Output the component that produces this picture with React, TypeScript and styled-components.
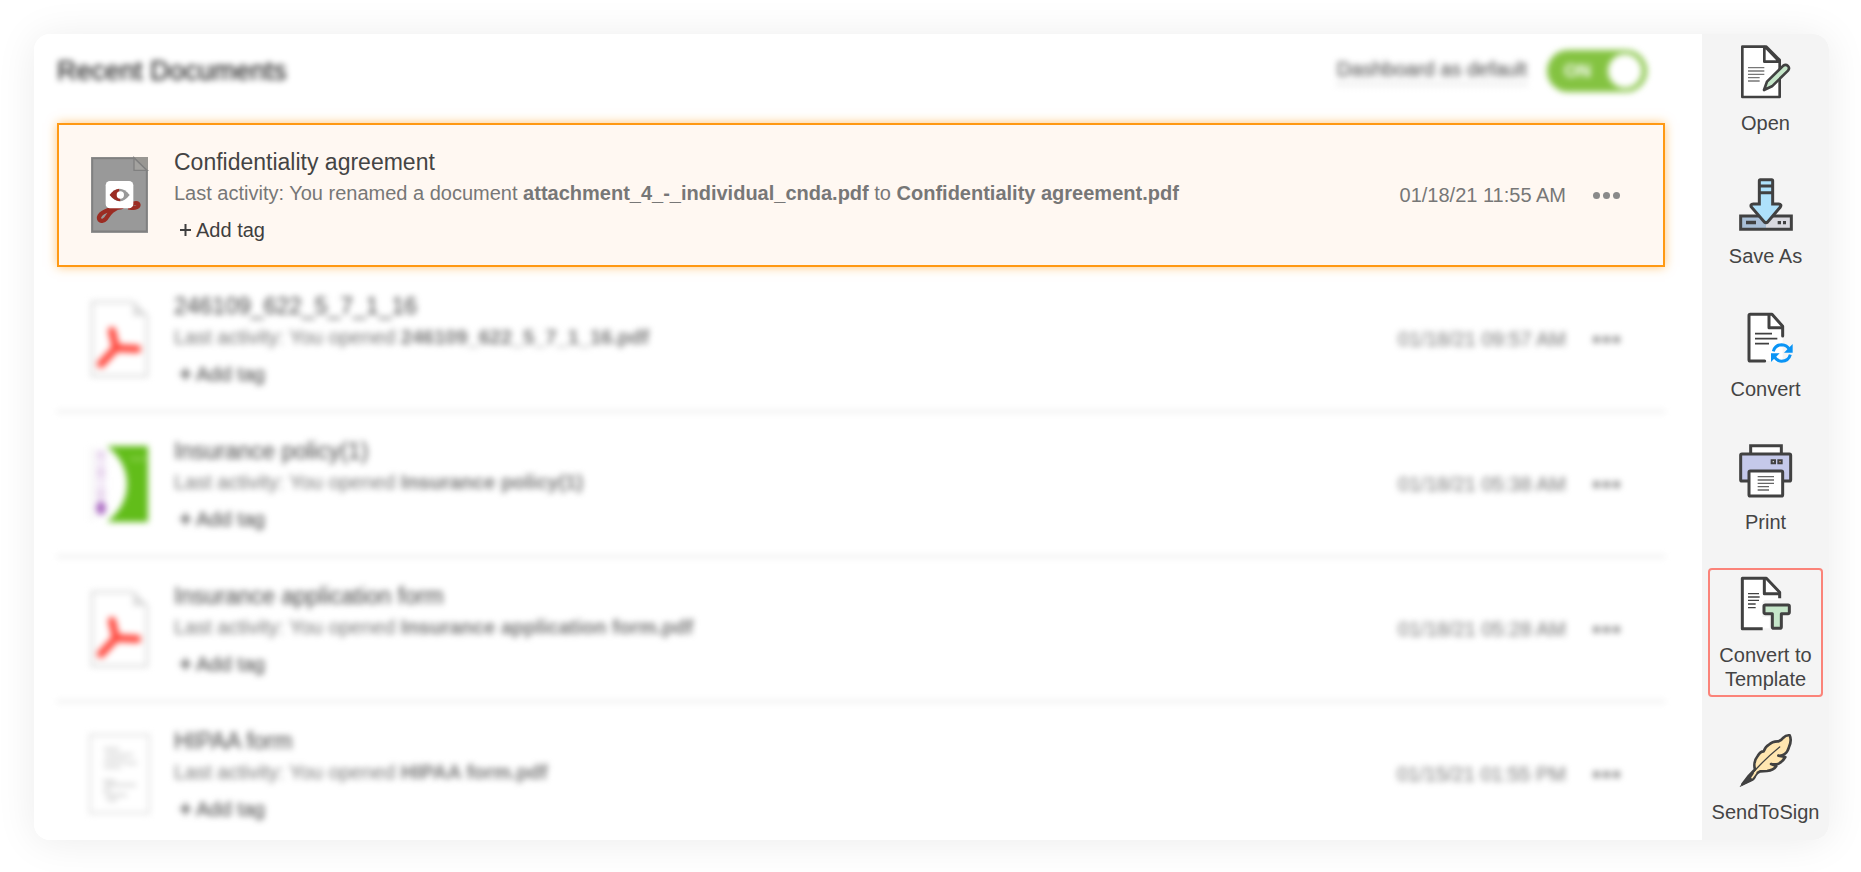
import React, { useState } from "react";
import styled, { createGlobalStyle, css } from "styled-components";

const GlobalStyle = createGlobalStyle`
  * { box-sizing: border-box; }
  body {
    margin: 0;
    background: #fff;
    color: #3f3f3f;
    font-family: "Liberation Sans", Arial, Helvetica, sans-serif;
    font-size: 20px;
    line-height: 24px;
  }
  button { font: inherit; color: inherit; background: none; border: 0; padding: 0; cursor: pointer; }
`;

const softFocus = css`
  filter: blur(3px);
`;

const Page = styled.div`
  min-height: 100vh;
  padding: 34px 32px 32px 34px;
`;

const Panel = styled.div`
  display: flex;
  overflow: hidden;
  background: #fff;
  border-radius: 16px;
`;

const PanelShadow = styled.div`
  border-radius: 16px;
  box-shadow: 0 2px 40px rgba(0, 0, 0, 0.08);
`;

const Documents = styled.main`
  flex: 1;
  min-width: 0;
  padding: 0 37px 0 23px;
`;

const Header = styled.header`
  display: flex;
  align-items: center;
  justify-content: space-between;
  height: 89px;
  padding: 0 18px 15px 0;
  ${softFocus}
`;

const Heading = styled.h1`
  margin: 0;
  font-size: 27px;
  line-height: 28px;
  font-weight: 400;
  color: #000;
`;

const SwitchField = styled.label`
  display: flex;
  align-items: center;
  gap: 20px;
  cursor: pointer;
`;

const SwitchText = styled.span`
  padding-bottom: 2px;
  border-bottom: 2px dotted #bbb;
`;

const Track = styled.span`
  display: flex;
  align-items: center;
  justify-content: space-between;
  width: 100px;
  height: 42px;
  padding: 0 5px 0 17px;
  border-radius: 21px;
  background: #84c341;
  color: #fff;
  font-size: 18px;
  font-weight: 700;
`;

const SwitchInput = styled.input`
  appearance: none;
  width: 34px;
  height: 34px;
  margin: 0;
  border-radius: 50%;
  background: #fff;
`;

const List = styled.ul`
  margin: 0;
  padding: 0;
  list-style: none;
`;

const Row = styled.li<{ $active?: boolean }>`
  display: flex;
  align-items: center;
  padding: 25px 45px 25px 34px;
  ${({ $active }) =>
    $active
      ? css`
          background: #fff8f2;
          box-shadow: inset 0 0 0 2px #ff9914, 0 0 10px rgba(255, 153, 20, 0.55);
        `
      : css`
          border-bottom: 1px solid #ccc;
          ${softFocus}
        `}
  &:last-child {
    padding-bottom: 19px;
    border-bottom: 0;
  }
`;

const Thumb = styled.svg`
  flex: none;
  width: 57px;
  height: 76px;
  margin-right: 26px;
  overflow: visible;
`;

const Info = styled.div`
  flex: 1;
  min-width: 0;
`;

const Title = styled.h2`
  margin: 0 0 5px;
  font-size: 23px;
  line-height: 28px;
  font-weight: 400;
  color: #444;
`;

const Activity = styled.p`
  margin: 0 0 13px;
  color: #777;
`;

const AddTag = styled.button`
  display: flex;
  align-items: center;
  gap: 5px;
  margin-left: 6px;
`;

const PlusIcon = styled.svg`
  width: 11px;
  height: 12px;
`;

const DateText = styled.time`
  margin-right: 27px;
  color: #777;
  white-space: nowrap;
`;

const MoreButton = styled.button`
  display: flex;
  gap: 3px;
`;

const Dot = styled.span`
  width: 7px;
  height: 7px;
  border-radius: 50%;
  background: #8a8a8a;
`;

const Sidebar = styled.nav`
  display: flex;
  flex: none;
  flex-direction: column;
  gap: 28px;
  width: 127px;
  padding: 2px 6px 10px;
  background: #f4f4f4;
`;

const Action = styled.button<{ $marked?: boolean }>`
  display: flex;
  flex-direction: column;
  align-items: center;
  gap: 13px;
  padding: 7px 0 4px;
  border: 2px solid ${({ $marked }) => ($marked ? "#fb8379" : "transparent")};
  border-radius: 4px;
  color: #444;
`;

const ActionIcon = styled.svg`
  width: 53px;
  height: 53px;
  overflow: visible;
`;

const INK = "#414141";

const PdfPage = () => (
  <>
    <path d="M1 1H42L56 15V75H1Z" fill="#fff" stroke="#d2d2d2" strokeWidth="2" />
    <path d="M42 1V15H56Z" fill="#ddd" />
    <path d="M21 30L25 47L46 48M25 47L10 63" fill="none" stroke="#ff4d43" strokeWidth="8" strokeLinecap="round" strokeLinejoin="round" />
  </>
);

const thumbs: Record<string, React.ReactNode> = {
  preview: (
    <g transform="scale(.3333)">
      <rect width="171" height="228" fill="#999" />
      <rect x="4" y="4" width="163" height="219" fill="none" stroke="#808080" strokeWidth="5" />
      <path d="M129 2V40H169Z" fill="#a3a29f" stroke="#808080" strokeWidth="4" />
      <path d="M129 0H171V40Z" fill="#999793" />
      <path d="M129 2L167 40" stroke="#808080" strokeWidth="4" />
      <path d="M92 150C64 153 35 163 26 176C18 190 35 197 44 186C53 173 61 155 92 148" fill="none" stroke="#9b2c23" strokeWidth="13" strokeLinecap="round" />
      <path d="M112 152C124 155 143 152 143 144C142 136 130 137 122 142" fill="none" stroke="#9b2c23" strokeWidth="12" />
      <rect x="44" y="72" width="83" height="82" rx="13" fill="#fff" />
      <path d="M56 114Q86 76 116 114Q86 152 56 114Z" fill="#999" />
      <path d="M56 114Q66 98 84 95L88 133Q70 131 56 114Z" fill="#9b2c23" />
      <circle cx="88" cy="114" r="11" fill="#fff" />
    </g>
  ),
  pdf: <PdfPage />,
  policy: (
    <>
      <path d="M16 0H57V76H16Q36 60 36 38Q36 16 16 0Z" fill="#62bd1a" />
      <path d="M39 13H55" stroke="#8bd04e" strokeWidth="3" />
      <path d="M1 1V75" stroke="#ddd" strokeWidth="1" />
      <path d="M10 4V54" stroke="#f3e9f7" strokeWidth="9" />
      <path d="M10 5V12M10 22V31M10 44V52" stroke="#e8d6ee" strokeWidth="9" />
      <ellipse cx="10" cy="62" rx="5" ry="7" fill="#ab6cc2" />
    </>
  ),
  form: (
    <>
      <rect x="-1" y="-1" width="59" height="78" fill="#fff" stroke="#ddd" strokeWidth="2" />
      <path d="M13 13H28M14 19H42M13 25H34M34 27H46M13 31H30M12 45H24M14 49H45M12 54H20M14 59H36M16 64H26" stroke="#c4c4c4" strokeWidth="2" />
    </>
  ),
};

const icons: Record<string, React.ReactNode> = {
  open: (
    <g strokeLinejoin="round" strokeLinecap="round" stroke={INK} strokeWidth="8">
      <path d="M10 5H82L122 45V156H10Z" fill="#fff" />
      <path d="M76 6V50H121L80 7" fill="#fff" />
      <path d="M27 68H76M27 78H76M27 88H76M27 98H62M27 108H62" stroke="#777" strokeWidth="4" strokeLinecap="butt" />
      <path d="M75 135L84 110L133 62Q140 57 147 63Q153 70 147 77L99 124Z" fill="#c5e6c9" />
    </g>
  ),
  save: (
    <g stroke={INK} strokeWidth="9">
      <path d="M5 114H81V154H5Z" fill="#a9bfd6" stroke="none" />
      <path d="M81 114H157V154H81Z" fill="#dadae0" stroke="none" />
      <path d="M5 114H157V154H5Z" fill="none" />
      <path d="M21 128H51V139H21ZM116 129H126V139H116ZM132 129H141V139H132Z" fill={INK} stroke="none" />
      <path d="M64 5H98Q101 5 101 8V78H119Q129 79 124 87L86 132Q81 136 76 132L37 87Q33 79 43 78H61V8Q61 5 64 5Z" fill="#aee1fb" />
      <path d="M61 24H101M61 44H101" />
    </g>
  ),
  convert: (
    <g fill="none" stroke={INK} strokeWidth="9" strokeLinecap="round" strokeLinejoin="round">
      <path d="M34 10H101L131 42V150H34Q30 150 30 146V14Q30 10 34 10Z" fill="#fff" stroke="none" />
      <path d="M131 75V46L99 10H34Q30 10 30 14V146Q30 150 34 150H77" />
      <path d="M90 12V50H130" />
      <path d="M48 68H99M48 83H115M48 98H90" strokeWidth="5" strokeLinecap="butt" />
      <circle cx="128" cy="126" r="34" fill="#f4f4f4" stroke="none" />
      <path d="M131 92A34 34 0 0 0 94 126Q94 144 108 154H131Z" fill="#fff" stroke="none" />
      <path d="M103 121Q108 102 128 101Q144 102 151 115M154 131Q149 150 128 151Q113 149 106 137" stroke="#0a94f5" strokeLinecap="butt" />
      <path d="M161 99V125H135ZM96 153V127H122Z" fill="#0a94f5" stroke="none" />
    </g>
  ),
  print: (
    <g stroke={INK} strokeWidth="9">
      <path d="M35 30V5H127V30" fill="#fff" />
      <rect x="5" y="30" width="150" height="81" rx="4" fill="#c5c9ea" />
      <path d="M98 49H108V58H98Z" fill="#fff" strokeWidth="6" />
      <path d="M118 49H128V58H118Z" fill="#ffc9a6" strokeWidth="6" />
      <rect x="30" y="81" width="101" height="75" rx="4" fill="#fff" />
      <path d="M56 98H105M56 108H105M56 118H105M56 128H90M56 138H90" strokeWidth="4" stroke="#666" />
    </g>
  ),
  template: (
    <g strokeLinejoin="round" stroke={INK} strokeWidth="9">
      <path d="M10 4H82L122 46V154H10Z" fill="#fff" stroke="none" />
      <path d="M122 64V46L82 4H10V155H71" fill="none" />
      <path d="M76 6V50H121" fill="none" />
      <path d="M27 50H60M27 60H62M27 70H60M27 81H50M27 92H50" fill="none" strokeWidth="4" />
      <path d="M77 69H124V77H157V120H126V158H92V120H70V77Z" fill="#f4f4f4" stroke="none" />
      <path d="M79 84H147Q151 84 151 88V106Q151 110 147 110H127V150Q127 154 123 154H104Q100 154 100 150V110H79Q75 110 75 106V88Q75 84 79 84Z" fill="#c5e6c9" />
    </g>
  ),
  sign: (
    <g stroke={INK} strokeWidth="8" strokeLinejoin="round" strokeLinecap="round">
      <path d="M48 106C44 94 47 77 56 66Q64 52 74 52Q79 38 90 32Q100 21 119 22Q128 18 132 12Q142 2 152 4Q159 19 150 39Q146 54 137 60Q130 66 118 65L139 69Q132 82 119 89Q108 92 96 90L112 96Q104 109 84 111L64 112Q53 116 49 124Q45 136 36 139L10 151L30 125Z" fill="#ffe6b0" />
      <path d="M4 157L30 124L44 118L41 134L32 141Z" fill={INK} strokeWidth="2" />
      <path d="M28 132Q66 85 122 39" fill="none" strokeWidth="4" />
      <path d="M39 131L50 116" stroke="#ffe6b0" strokeWidth="5" />
    </g>
  ),
};

type Doc = { title: string; thumb: string; date: string; activity: React.ReactNode; active?: boolean };

const docs: Doc[] = [
  {
    title: "Confidentiality agreement",
    thumb: "preview",
    date: "01/18/21 11:55 AM",
    active: true,
    activity: (
      <>
        You renamed a document <b>attachment_4_-_individual_cnda.pdf</b> to <b>Confidentiality agreement.pdf</b>
      </>
    ),
  },
  { title: "246109_622_5_7_1_16", thumb: "pdf", date: "01/18/21 09:57 AM", activity: <>You opened <b>246109_622_5_7_1_16.pdf</b></> },
  { title: "Insurance policy(1)", thumb: "policy", date: "01/18/21 05:38 AM", activity: <>You opened <b>Insurance policy(1)</b></> },
  { title: "Insurance application form", thumb: "pdf", date: "01/18/21 05:28 AM", activity: <>You opened <b>Insurance application form.pdf</b></> },
  { title: "HIPAA form", thumb: "form", date: "01/15/21 01:55 PM", activity: <>You opened <b>HIPAA form.pdf</b></> },
];

const actions = [
  { label: "Open", icon: "open" },
  { label: "Save As", icon: "save" },
  { label: "Convert", icon: "convert" },
  { label: "Print", icon: "print" },
  { label: "Convert to Template", icon: "template", marked: true },
  { label: "SendToSign", icon: "sign" },
];

const DocumentRow = ({ doc }: { doc: Doc }) => (
  <Row $active={doc.active}>
    <Thumb viewBox="0 0 57 76" aria-hidden="true">{thumbs[doc.thumb]}</Thumb>
    <Info>
      <Title>{doc.title}</Title>
      <Activity>Last activity: {doc.activity}</Activity>
      <AddTag type="button">
        <PlusIcon viewBox="0 0 11 12" aria-hidden="true">
          <path d="M0 6H11M5.5 0V12" stroke="currentColor" strokeWidth="2" />
        </PlusIcon>
        Add tag
      </AddTag>
    </Info>
    <DateText>{doc.date}</DateText>
    <MoreButton type="button" aria-label={`More actions for ${doc.title}`}>
      <Dot />
      <Dot />
      <Dot />
    </MoreButton>
  </Row>
);

export default function App() {
  const [on, setOn] = useState(true);
  return (
    <Page>
      <GlobalStyle />
      <PanelShadow>
        <Panel>
          <Documents>
            <Header>
              <Heading>Recent Documents</Heading>
              <SwitchField>
                <SwitchText>Dashboard as default</SwitchText>
                <Track>
                  {on ? "ON" : "OFF"}
                  <SwitchInput type="checkbox" role="switch" checked={on} onChange={() => setOn(!on)} />
                </Track>
              </SwitchField>
            </Header>
            <List>
              {docs.map((doc) => (
                <DocumentRow key={doc.title} doc={doc} />
              ))}
            </List>
          </Documents>
          <Sidebar aria-label="Document actions">
            {actions.map(({ label, icon, marked }) => (
              <Action key={label} type="button" $marked={marked}>
                <ActionIcon viewBox="0 0 159 159" aria-hidden="true">{icons[icon]}</ActionIcon>
                <span>{label}</span>
              </Action>
            ))}
          </Sidebar>
        </Panel>
      </PanelShadow>
    </Page>
  );
}
